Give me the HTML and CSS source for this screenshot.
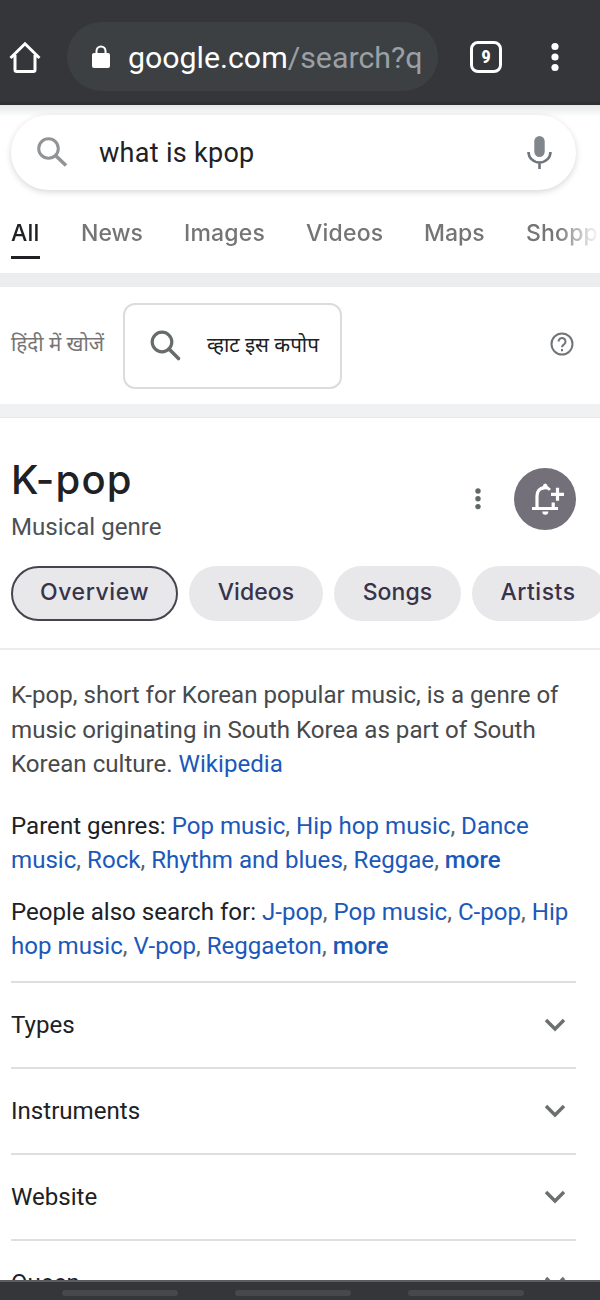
FILE: index.html
```html
<!DOCTYPE html>
<html lang="en">
<head>
<meta charset="utf-8">
<title>what is kpop - Google Search</title>
<link rel="stylesheet" href="styles.css">
</head>
<body>
<div class="screen">
  <header class="browser-bar">
    <svg class="home" width="34" height="34" viewBox="0 0 34 34"><path d="M2.500 18 17 3.800 31.500 18M7 15v14.700q0 1.800 1.800 1.800h16.400q1.800 0 1.800-1.800V15" fill="none" stroke="#fff" stroke-width="3"/></svg>
    <div class="omnibox">
      <svg class="lock" width="18" height="24" viewBox="0 0 18 24"><rect y="8" width="18" height="15" rx="2" fill="#fff"/><path d="M4.500 9V6a4.500 4.500 0 0 1 9 0v3" fill="none" stroke="#fff" stroke-width="2"/></svg>
      <span class="url">google.com<span class="path">/search?q</span></span>
    </div>
    <span class="tab-count">9</span>
    <svg class="menu" width="8" height="30" viewBox="0 0 8 30" fill="#fff"><circle cx="4" cy="4.500" r="3.600"/><circle cx="4" cy="15" r="3.600"/><circle cx="4" cy="25.500" r="3.600"/></svg>
  </header>

  <main class="page">
    <section class="search-header">
      <div class="search-box">
        <svg class="lens" width="32" height="32" viewBox="0 0 32 32" fill="none" stroke="#909497"><circle cx="11.500" cy="11.500" r="9.800" stroke-width="3"/><path d="m18.500 18.500 10.500 10" stroke-width="3.600"/></svg>
        <span class="query">what is kpop</span>
        <svg class="mic" width="26" height="34" viewBox="0 0 26 34"><rect x="8.300" y="0" width="10.400" height="21" rx="5.200" fill="#80868b"/><path d="M2.500 16a11 10.500 0 0 0 22 0M13.500 26.500V33" fill="none" stroke="#70757a" stroke-width="2.600"/></svg>
      </div>
      <nav class="tabs">
        <a class="tab active">All</a><a class="tab news">News</a><a class="tab images">Images</a><a class="tab videos">Videos</a><a class="tab maps">Maps</a><a class="tab shopping">Shopping</a>
      </nav>
    </section>

    <section class="language">
      <span class="language-label">हिंदी में खोजें</span>
      <div class="language-box">
        <svg width="32" height="32" viewBox="0 0 32 32" fill="none" stroke="#666b6b"><circle cx="12" cy="12" r="9.800" stroke-width="3.200"/><path d="m19 19 9.500 9.500" stroke-width="3.600" stroke-linecap="round"/></svg>
        <span>व्हाट इस कपोप</span>
      </div>
      <svg class="help" width="24" height="24" viewBox="0 0 24 24" fill="none" stroke="#70757a" stroke-width="2"><circle cx="12" cy="12" r="10.500"/><path d="M8.500 9.500a3.500 3.500 0 1 1 5.900 2.500c-1.500 1.300-2.400 1.700-2.400 3.300"/><path d="M12 17v2.200"/></svg>
    </section>

    <section class="entity">
      <div class="entity-top">
        <div class="entity-name"><h1>K-pop</h1><p>Musical genre</p></div>
        <svg class="more-dots" width="6" height="22" viewBox="0 0 6 22" fill="#5f6866"><circle cx="3" cy="3" r="2.700"/><circle cx="3" cy="10.800" r="2.700"/><circle cx="3" cy="18.600" r="2.700"/></svg>
        <div class="follow">
          <svg width="62" height="62" viewBox="0 0 62 62" fill="none" stroke="#fff" stroke-width="3.200"><path d="M18 40.500h26M23 40.500V28q0-7.500 7.500-8.500M39.200 34.500v6M37 26.300h13M43.500 19.800v13"/><path d="m26 20.500 3-2.500q0-2.500 2.200-2.500T33.500 18l3.500 3-2 1.700q-3-2.500-7-.7zM28.300 43.500h6a3 3.300 0 0 1-6 0z" fill="#fff" stroke="none"/></svg>
        </div>
      </div>
      <div class="chips">
        <a class="chip selected">Overview</a><a class="chip c-videos">Videos</a><a class="chip c-songs">Songs</a><a class="chip c-artists">Artists</a>
      </div>
    </section>

    <section class="facts">
      <p class="description">K-pop, short for Korean popular music, is a genre of<br>music originating in South Korea as part of South<br>Korean culture. <a>Wikipedia</a></p>
      <p class="fact">Parent genres: <span class="links"><a>Pop music</a>, <a>Hip hop music</a>, <a>Dance<br>music</a>, <a>Rock</a>, <a>Rhythm and blues</a>, <a>Reggae</a>, <a class="more">more</a></span></p>
      <p class="fact">People also search for: <span class="links"><a>J-pop</a>, <a>Pop music</a>, <a>C-pop</a>, <a>Hip<br>hop music</a>, <a>V-pop</a>, <a>Reggaeton</a>, <a class="more">more</a></span></p>
    </section>

    <section class="accordion">
      <div class="row"><span>Types</span><svg width="22" height="14" viewBox="0 0 22 14"><path d="m2 2 9 9 9-9" fill="none" stroke="#6b706e" stroke-width="3.400"/></svg></div>
      <div class="row"><span>Instruments</span><svg width="22" height="14" viewBox="0 0 22 14"><path d="m2 2 9 9 9-9" fill="none" stroke="#6b706e" stroke-width="3.400"/></svg></div>
      <div class="row"><span>Website</span><svg width="22" height="14" viewBox="0 0 22 14"><path d="m2 2 9 9 9-9" fill="none" stroke="#6b706e" stroke-width="3.400"/></svg></div>
      <div class="row"><span>Queen</span><svg width="22" height="14" viewBox="0 0 22 14"><path d="m2 2 9 9 9-9" fill="none" stroke="#6b706e" stroke-width="3.400"/></svg></div>
    </section>
  </main>

  <footer class="nav-hints"><i></i><i></i><i></i></footer>
</div>
</body>
</html>
```
FILE: styles.css
```css
* { box-sizing: border-box; }
body { margin: 0; font-family: Roboto, "Noto Sans", sans-serif; color: #202124; background: #fff; }
h1, p { margin: 0; font-weight: 400; }
svg { display: block; flex: none; }
.screen { width: 600px; height: 1300px; display: flex; flex-direction: column; overflow: hidden; }

.browser-bar { flex: none; height: 105px; padding: 11px 0 0 8px; display: flex; align-items: center; background: #35363a; border-bottom: 3px solid #2f3033; }
.omnibox { width: 371px; height: 69px; margin-left: 25px; padding-left: 25px; border-radius: 35px; background: #3c4043; display: flex; align-items: center; }
.lock { margin-top: 0; }
.url { margin: 2px 0 0 18px; font-size: 30.300px; line-height: 40px; color: #fff; white-space: nowrap; }
.path { color: #9aa0a6; }
.tab-count { width: 32px; height: 32px; margin-left: 32px; border: 3px solid #fff; border-radius: 8px; color: #fff; font: 700 19px/26px "Roboto Condensed", Roboto, sans-serif; text-align: center; }
.menu { margin-left: 49px; }

.page { flex: 1; min-height: 0; overflow: hidden; background: linear-gradient(#e6e7e7, #fff 12px); }
.search-header { height: 168px; padding: 10px 0 0 11px; }
.search-box { width: 565px; height: 75px; padding: 0 24px 0 26px; border-radius: 38px; background: #fff; box-shadow: 0 2px 6px rgba(32,33,36,.18); display: flex; align-items: center; }
.query { flex: 1; margin-left: 30px; font-size: 27px; line-height: 36px; letter-spacing: .3px; }
.lens { margin-top: 1px; }
.tabs { height: 82px; padding-top: 25px; display: flex; overflow: hidden; white-space: nowrap; font: 500 23px/36px Inter, sans-serif; letter-spacing: .2px; color: #757575; -webkit-mask-image: linear-gradient(90deg, #000 545px, transparent 589px); mask-image: linear-gradient(90deg, #000 545px, transparent 589px); }
.tab { flex: none; }
.active { width: 29px; height: 44px; border-bottom: 3px solid #202124; color: #202124; }
.news { width: 62px; margin-left: 41px; letter-spacing: 0; }
.images { width: 82px; margin-left: 41px; }
.videos { width: 77px; margin-left: 40px; }
.maps { width: 61px; margin-left: 41px; letter-spacing: 0; }
.shopping { margin-left: 41px; }

.language { height: 144px; padding: 0 26px 0 11px; border: solid #eff1f2; border-width: 14px 0 13px; border-top-color: #ecedef; background: #fff; display: flex; align-items: center; }
.language-label { width: 112px; font: 20.600px/30px "Noto Sans Devanagari", "Noto Sans", sans-serif; color: #757575; white-space: nowrap; }
.language-box { width: 219px; height: 86px; padding-left: 25px; border: 2px solid #dadce0; border-radius: 12px; display: flex; align-items: center; font: 20.600px/30px "Noto Sans Devanagari", "Noto Sans", sans-serif; white-space: nowrap; }
.language-box span { margin: 2px 0 0 25px; }
.help { margin: -4px 0 0 auto; }

.entity { height: 233px; background: #fff; border-top: 1px solid #e6e7e9; border-bottom: 2px solid #ececee; padding-left: 11px; overflow: hidden; }
.entity-top { height: 148px; display: flex; padding-top: 36px; }
.entity-name { width: 464px; }
h1 { font: 500 40px/52px Inter, sans-serif; letter-spacing: 1.200px; }
.entity-name p { margin-top: 4px; font-size: 24.100px; line-height: 34px; color: #4d5156; }
.more-dots { margin-top: 34px; }
.follow { margin: 14px 0 0 33px; width: 62px; height: 62px; border-radius: 50%; background: #747079; }
.chips { display: flex; gap: 11px; }
.chip { flex: none; height: 55px; border-radius: 28px; background: #e8e8ea; color: #38334a; text-align: center; font: 500 23px/53px Inter, sans-serif; letter-spacing: .1px; }
.selected { width: 167px; border: 2px solid #48434f; line-height: 49px; letter-spacing: .600px; }
.c-videos { width: 134px; }
.c-songs { width: 127px; }
.c-artists { width: 135px; padding-right: 3px; letter-spacing: .500px; }

.facts { height: 330.500px; padding: 28px 11px 0; font-size: 24.100px; line-height: 34.500px; white-space: nowrap; }
.description { color: #47494c; margin-bottom: 27px; }
.fact { margin-bottom: 17px; }
.links { color: #5f6368; }
.facts a { color: #1c58b9; }
.facts .more { font-weight: 500; }

.accordion { margin: 0 24px 0 11px; }
.row { height: 86.100px; padding-right: 10px; border-top: 2px solid #dedfe1; display: flex; align-items: center; justify-content: space-between; font-size: 24.100px; line-height: 34px; }

.nav-hints { flex: none; height: 20px; padding: 8px 0 0 62px; display: flex; gap: 57px; background: #35363a; border-top: 2px solid #5c5d60; }
.nav-hints i { width: 116px; height: 6px; border-radius: 3px; background: #47484b; }
```
